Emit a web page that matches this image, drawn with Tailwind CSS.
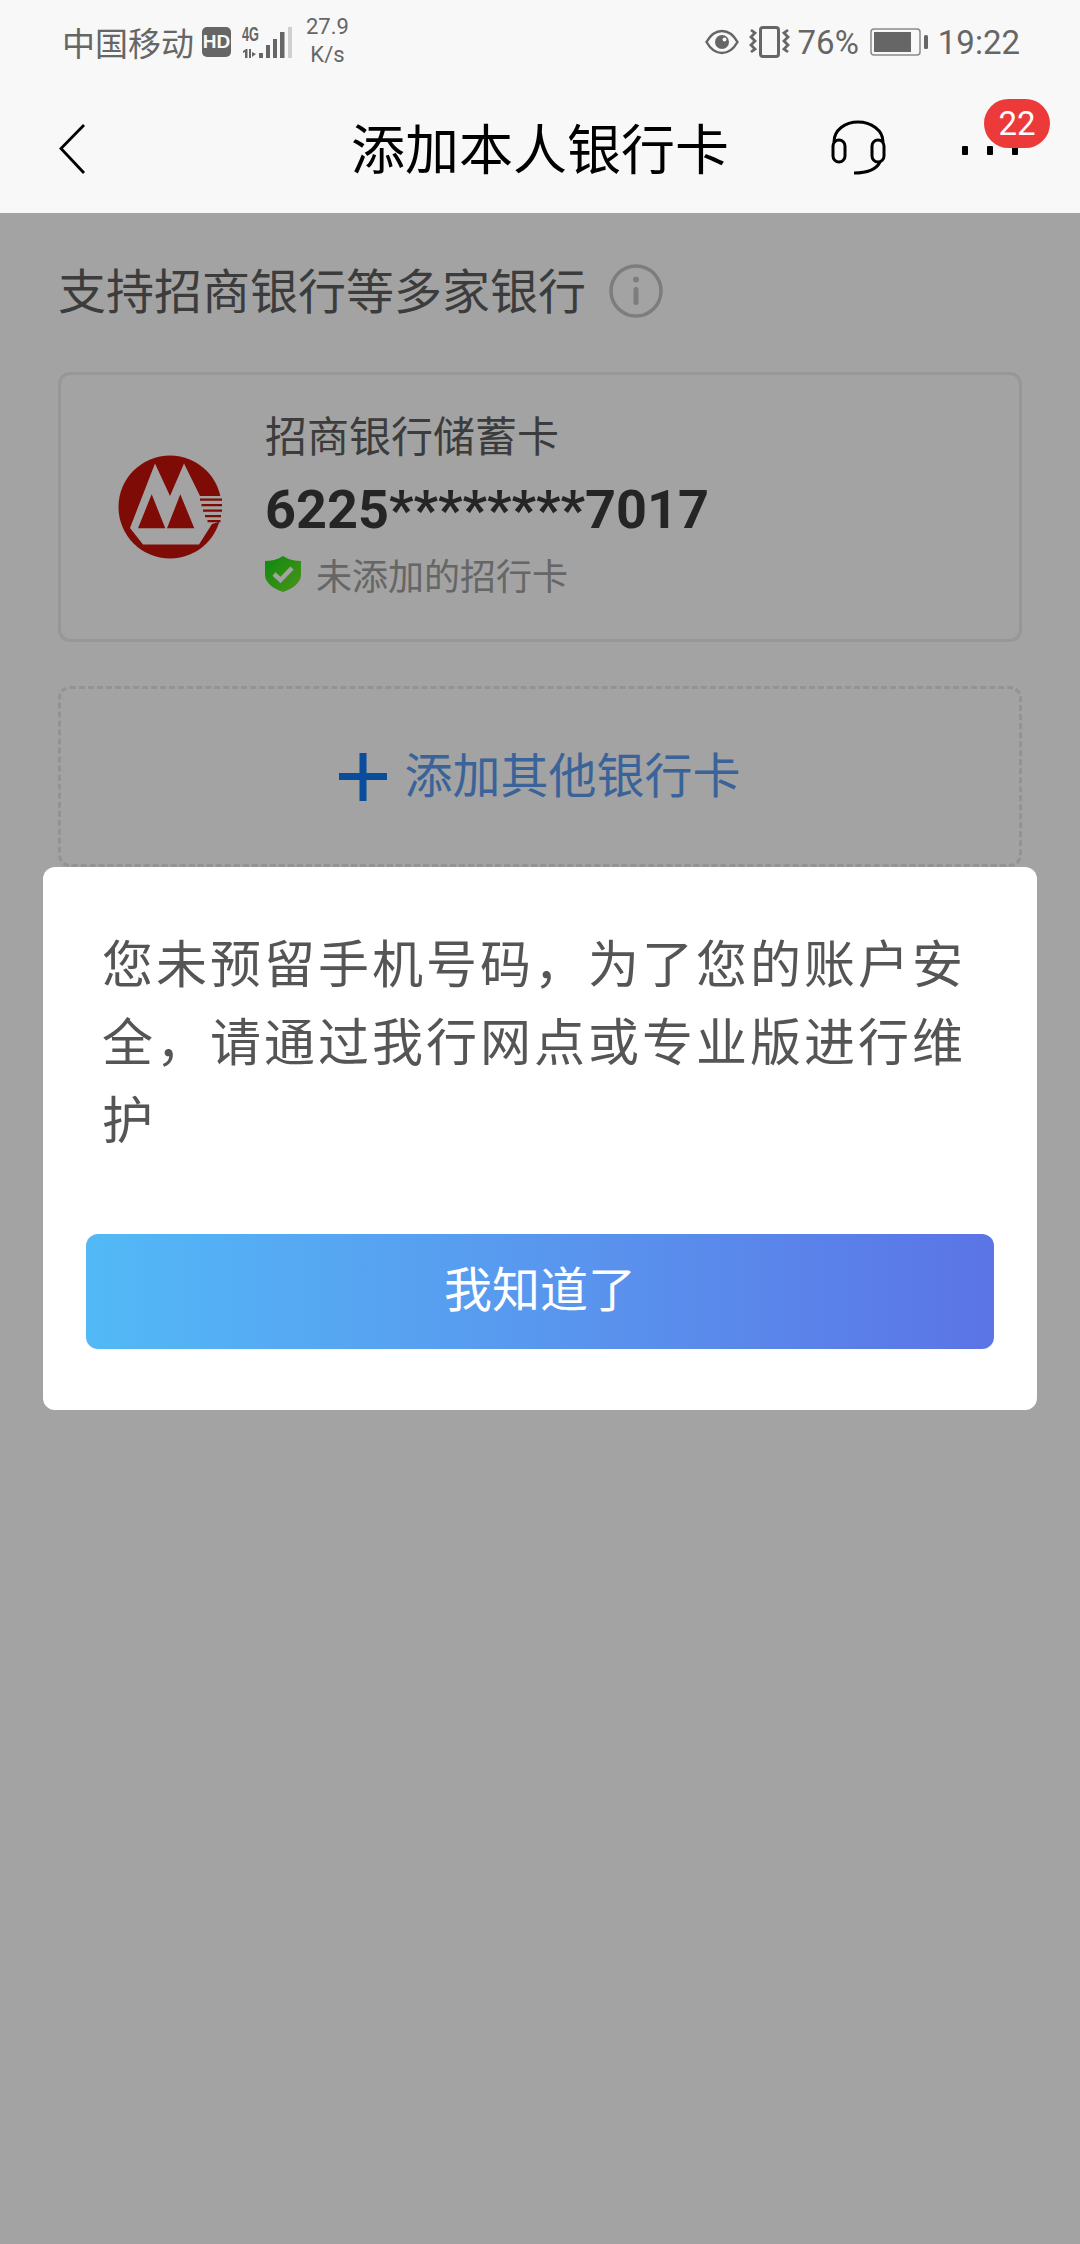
<!DOCTYPE html>
<html lang="zh-CN">
  <head>
    <meta charset="UTF-8" />
    <title>添加本人银行卡</title>
    <script src="https://cdn.jsdelivr.net/npm/@tailwindcss/browser@4"></script>
  </head>
  <body class="bg-white font-['Noto_Sans_CJK_SC',sans-serif]">
    <div class="relative w-[1080px] h-[2244px] overflow-hidden flex flex-col">
      <!-- status bar + title bar -->
      <header class="h-[213px] shrink-0 bg-[#f8f8f8]">
        <div class="h-[84px] flex items-center justify-between pl-[62px] pr-[60px] text-[#666666]">
          <div class="flex items-center">
            <span class="text-[33px] leading-none">中国移动</span>
            <span class="ml-[8px] w-[29px] h-[30px] rounded-[5px] bg-[#666666] text-[#f8f8f8] text-[19px] font-bold flex items-center justify-center font-['Liberation_Sans',sans-serif]">HD</span>
            <svg class="ml-[11px] -mt-[4px]" width="50" height="37" viewBox="0 -4 50 37" fill="#666666">
              <text x="0" y="15" font-size="20" font-weight="700" font-family="Liberation Sans" textLength="17" lengthAdjust="spacingAndGlyphs">4G</text>
              <path d="M1 25l3-2h1.500v9H3v-6l-2 1zM7 23h2v9H7zM10 26l4 2-4 3zM17 27h4v5h-4zM24 19h4v13h-4zM31 13h4v19h-4zM38 6h4.500v26H38z" />
              <rect x="46" y="1" width="4" height="31" fill="#cfcfcf" />
            </svg>
            <div class="ml-[14px] flex flex-col items-center text-[22px] leading-[28px] font-['Roboto',sans-serif] -mt-[2px]">
              <span>27.9</span>
              <span>K/s</span>
            </div>
          </div>
          <div class="flex items-center">
            <svg width="34" height="26" viewBox="0 0 34 26" fill="none">
              <path d="M1.500 13C6 5 11 2 17 2S28 5 32.500 13C28 21 23 24 17 24S6 21 1.500 13Z" stroke="#666666" stroke-width="2.500" />
              <circle cx="17" cy="13" r="7" fill="#666666" />
              <circle cx="19.500" cy="10.500" r="2" fill="#f8f8f8" />
            </svg>
            <svg class="ml-[10px]" width="41" height="32" viewBox="0 0 41 32" fill="none" stroke="#666666">
              <rect x="11.500" y="1.500" width="18" height="29" rx="2.500" stroke-width="3" />
              <path d="M2 4l4 3-4 4 4 4-4 4 4 4-4 3" stroke-width="2.800" />
              <path d="M39 4l-4 3 4 4-4 4 4 4-4 4 4 3" stroke-width="2.800" />
            </svg>
            <span class="ml-[8px] text-[33px] leading-none font-['Roboto',sans-serif]">76%</span>
            <svg class="ml-[11px]" width="58" height="28" viewBox="0 0 58 28" fill="none">
              <rect x="1" y="1" width="49" height="26" rx="3" stroke="#8a8a8a" stroke-width="1.500" />
              <rect x="4" y="4" width="37" height="20" fill="#666666" />
              <rect x="54" y="7" width="4" height="14" rx="1.500" fill="#666666" />
            </svg>
            <span class="ml-[10px] text-[33px] leading-none font-['Roboto',sans-serif]">19:22</span>
          </div>
        </div>
        <div class="relative h-[129px] flex items-center justify-center">
          <svg class="absolute left-[58px] top-[39px]" width="28" height="52" viewBox="0 0 28 52" fill="none">
            <path d="M26 2L3 25.500 26 50" stroke="#000000" stroke-width="2.800" />
          </svg>
          <h1 class="text-[54px] leading-none text-black -mt-[3px]">添加本人银行卡</h1>
          <svg class="absolute left-[830px] top-[36px]" width="58" height="56" viewBox="0 0 58 56" fill="none" stroke="#000000" stroke-width="3">
            <path d="M4 22C4 10 15 2 28 2S53 10 53 22" />
            <rect x="3" y="20" width="12" height="22" rx="6" />
            <rect x="42" y="20" width="12" height="22" rx="6" />
            <path d="M50 42C46 50 38 53 24 53" />
          </svg>
          <div class="absolute left-[962px] top-[62px] flex gap-[19px]">
            <span class="w-[6px] h-[9px] rounded-[1px] bg-black"></span>
            <span class="w-[6px] h-[9px] rounded-[1px] bg-black"></span>
            <span class="w-[6px] h-[9px] rounded-[1px] bg-black"></span>
          </div>
          <span class="absolute left-[984px] top-[15px] w-[66px] h-[49px] rounded-full bg-[#ec3a3b] text-white text-[33px] leading-[49px] text-center font-['Roboto',sans-serif]">22</span>
        </div>
      </header>

      <!-- page content -->
      <main class="relative flex-1 pt-[53px] px-[58px]">
        <div class="flex items-center h-[50px]">
          <span class="text-[48px] leading-none text-[#5f5f5f] -mt-[6px]">支持招商银行等多家银行</span>
          <svg class="ml-[23px]" width="54" height="54" viewBox="0 0 54 54" fill="none">
            <circle cx="27" cy="27" r="25" stroke="#c4c4c4" stroke-width="3.500" />
            <circle cx="27" cy="15.500" r="3" fill="#c4c4c4" />
            <rect x="24.500" y="23" width="5" height="18" rx="2.500" fill="#c4c4c4" />
          </svg>
        </div>

        <div class="mt-[56px] w-[964px] h-[270px] rounded-[12px] border-[3px] border-[#ececec] flex items-center">
          <svg class="ml-[57px] shrink-0" width="104" height="104" viewBox="0 0 104 104">
            <circle cx="52" cy="52" r="51.500" fill="#c7120a" />
            <path d="M37 8.500L52 41 66 8.500 82 41 104 41 104 66 94 69 81 89.500 25 89.500 12 73Z" fill="#ffffff" />
            <path d="M20 73.300L33.700 39.300 47.300 73.300ZM49 73.300L62.300 39.300 76.300 73.300Z" fill="#c7120a" />
            <path d="M82 43.500h22v2.200H82zM83.500 49h20.500v2.200H83.500zM85 54.500h19v2.200H85zM87 60h16v2.200H87zM89.500 65h13v2.200H89.500z" fill="#c7120a" />
          </svg>
          <div class="ml-[43px] pb-[9px]">
            <p class="text-[42px] leading-[42px] text-[#5f5f5f]">招商银行储蓄卡</p>
            <p class="mt-[28px] text-[54px] leading-[54px] font-bold text-[#3b3b3b] font-['Roboto',sans-serif]">6225********7017</p>
            <div class="mt-[19px] flex items-center">
              <svg width="36" height="36" viewBox="0 0 36 36">
                <defs>
                  <linearGradient id="shield" x1="0" y1="0" x2="1" y2="1">
                    <stop offset="0" stop-color="#14d614" />
                    <stop offset="1" stop-color="#78e82a" />
                  </linearGradient>
                </defs>
                <path d="M18 0C24 4 30 5 36 5V19C36 27 27 33 18 36 9 33 0 27 0 19V5C6 5 12 4 18 0Z" fill="url(#shield)" />
                <path d="M9 18L15.500 24 27 12" fill="none" stroke="#ffffff" stroke-width="4.500" />
              </svg>
              <span class="ml-[15px] text-[36px] leading-none text-[#a0a0a0]">未添加的招行卡</span>
            </div>
          </div>
        </div>

        <div class="mt-[44px] w-[964px] h-[181px] rounded-[12px] border-[3px] border-dashed border-[#e6e6e6] flex items-center justify-center">
          <svg width="48" height="48" viewBox="0 0 48 48" fill="#0f79f5">
            <rect x="0" y="20" width="48" height="7" />
            <rect x="20.500" y="0" width="7" height="48" />
          </svg>
          <span class="ml-[17px] text-[48px] leading-none text-[#5c9bf0] -mt-[10px]">添加其他银行卡</span>
        </div>
      </main>

      <!-- dim layer + dialog -->
      <div class="absolute inset-x-0 top-[213px] bottom-0 bg-black/36"></div>
      <div class="absolute left-[43px] top-[867px] w-[994px] h-[543px] rounded-[12px] bg-white pl-[59px] pr-[60px] pt-[55px]">
        <p class="text-[51px] leading-[78px] tracking-[3px] text-[#555555]">您未预留手机号码，为了您的账户安全，请通过我行网点或专业版进行维护</p>
        <button class="absolute left-[43px] top-[367px] w-[908px] h-[115px] pb-[12px] rounded-[12px] bg-linear-to-r from-[#52b9f6] to-[#5b74e6] text-white text-[48px]">我知道了</button>
      </div>
    </div>
  </body>
</html>
